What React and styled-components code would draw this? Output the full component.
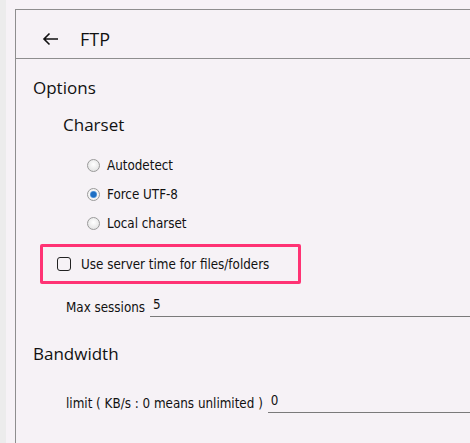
import React from "react";
import styled, { createGlobalStyle } from "styled-components";

const GlobalStyle = createGlobalStyle`
  html, body {
    margin: 0;
    padding: 0;
    background: #f6f2f6;
  }
  body {
    font-family: "Open Sans", "Noto Sans", sans-serif;
    color: #111;
  }
`;

const Page = styled.div`
  display: flex;
  width: 470px;
  height: 443px;
  overflow: hidden;
`;

const Strip = styled.div`
  width: 6px;
  background: #ececec;
`;

const Main = styled.div`
  flex: 1;
  padding: 9px 0 0 9px;
`;

const Panel = styled.div`
  height: 100%;
  border-top: 1px solid #8e8e8e;
  border-left: 1px solid #8e8e8e;
`;

const Header = styled.div`
  box-sizing: border-box;
  display: flex;
  align-items: center;
  height: 49px;
  padding: 9px 0 0 26px;
  border-bottom: 1px solid #8e8e8e;
`;

const Back = styled.svg`
  width: 17px;
  height: 14px;
  margin-right: 21px;
`;

const Title = styled.div`
  font-family: "Open Sans", sans-serif;
  font-size: 18px;
  color: #111;
`;

const Body = styled.div`
  padding: 17px 0 0 17px;
`;

const Heading = styled.div`
  font-family: "Open Sans", sans-serif;
  font-size: 17px;
  line-height: 24px;
  padding-left: ${p => p.$indent || 0}px;
  margin-top: ${p => p.$top || 0}px;
`;

const RadioList = styled.div`
  display: flex;
  flex-direction: column;
  gap: 11px;
  padding: 19px 0 0 54px;
`;

const Label = styled.label`
  display: flex;
  align-items: center;
  height: 18px;
  font-family: "DejaVu Sans Condensed", "DejaVu Sans", sans-serif;
  font-size: 13.3px;
  color: #111;
  white-space: nowrap;
`;

const RadioDot = styled.span`
  box-sizing: border-box;
  width: 13px;
  height: 13px;
  border-radius: 50%;
  margin-right: 7px;
  border: 1px solid #9a9a9a;
  background: ${p =>
    p.$on
      ? "radial-gradient(circle, #1e6fc4 0 2.6px, #7fb3e6 3.4px, #f4f4f4 4px)"
      : "radial-gradient(circle at 50% 40%, #ffffff 0, #dcdcdc 100%)"};
`;

const Highlight = styled.div`
  box-sizing: border-box;
  width: 261px;
  height: 40px;
  margin: 12px 0 0 7px;
  border: 3px solid #ff3374;
  border-radius: 2px;
  display: flex;
  align-items: center;
  padding-left: 14px;
`;

const Box = styled.span`
  box-sizing: border-box;
  width: 14px;
  height: 14px;
  border: 1.5px solid #222;
  border-radius: 3px;
  margin-right: 10px;
`;

const FieldRow = styled.div`
  display: flex;
  align-items: flex-end;
  padding-left: 33px;
  margin-top: ${p => p.$top}px;
`;

const FieldLabel = styled(Label)`
  height: 20px;
  margin-right: 5px;
`;

const Field = styled.div`
  flex: 1;
  height: 20px;
  border-bottom: 1px solid #7a7a7a;
  padding-left: 3px;
  font-family: "DejaVu Sans Condensed", "DejaVu Sans", sans-serif;
  font-size: 13.3px;
  line-height: 18px;
`;

const radios = [
  { label: "Autodetect", on: false },
  { label: "Force UTF-8", on: true },
  { label: "Local charset", on: false },
];

export default function App() {
  return (
    <>
      <GlobalStyle />
      <Page>
        <Strip />
        <Main>
          <Panel>
            <Header>
              <Back viewBox="0 0 17 14">
                <path
                  d="M16 7H2M7.5 1.5L2 7l5.5 5.5"
                  fill="none"
                  stroke="#111"
                  strokeWidth="1.6"
                />
              </Back>
              <Title>FTP</Title>
            </Header>
            <Body>
              <Heading>Options</Heading>
              <Heading $indent={30} $top={13}>
                Charset
              </Heading>
              <RadioList>
                {radios.map(r => (
                  <Label key={r.label}>
                    <RadioDot $on={r.on} />
                    {r.label}
                  </Label>
                ))}
              </RadioList>
              <Highlight>
                <Label>
                  <Box />
                  Use server time for files/folders
                </Label>
              </Highlight>
              <FieldRow $top={12}>
                <FieldLabel>Max sessions</FieldLabel>
                <Field>5</Field>
              </FieldRow>
              <Heading $top={25}>Bandwidth</Heading>
              <FieldRow $top={26}>
                <FieldLabel>limit ( KB/s : 0 means unlimited )</FieldLabel>
                <Field>0</Field>
              </FieldRow>
            </Body>
          </Panel>
        </Main>
      </Page>
    </>
  );
}
